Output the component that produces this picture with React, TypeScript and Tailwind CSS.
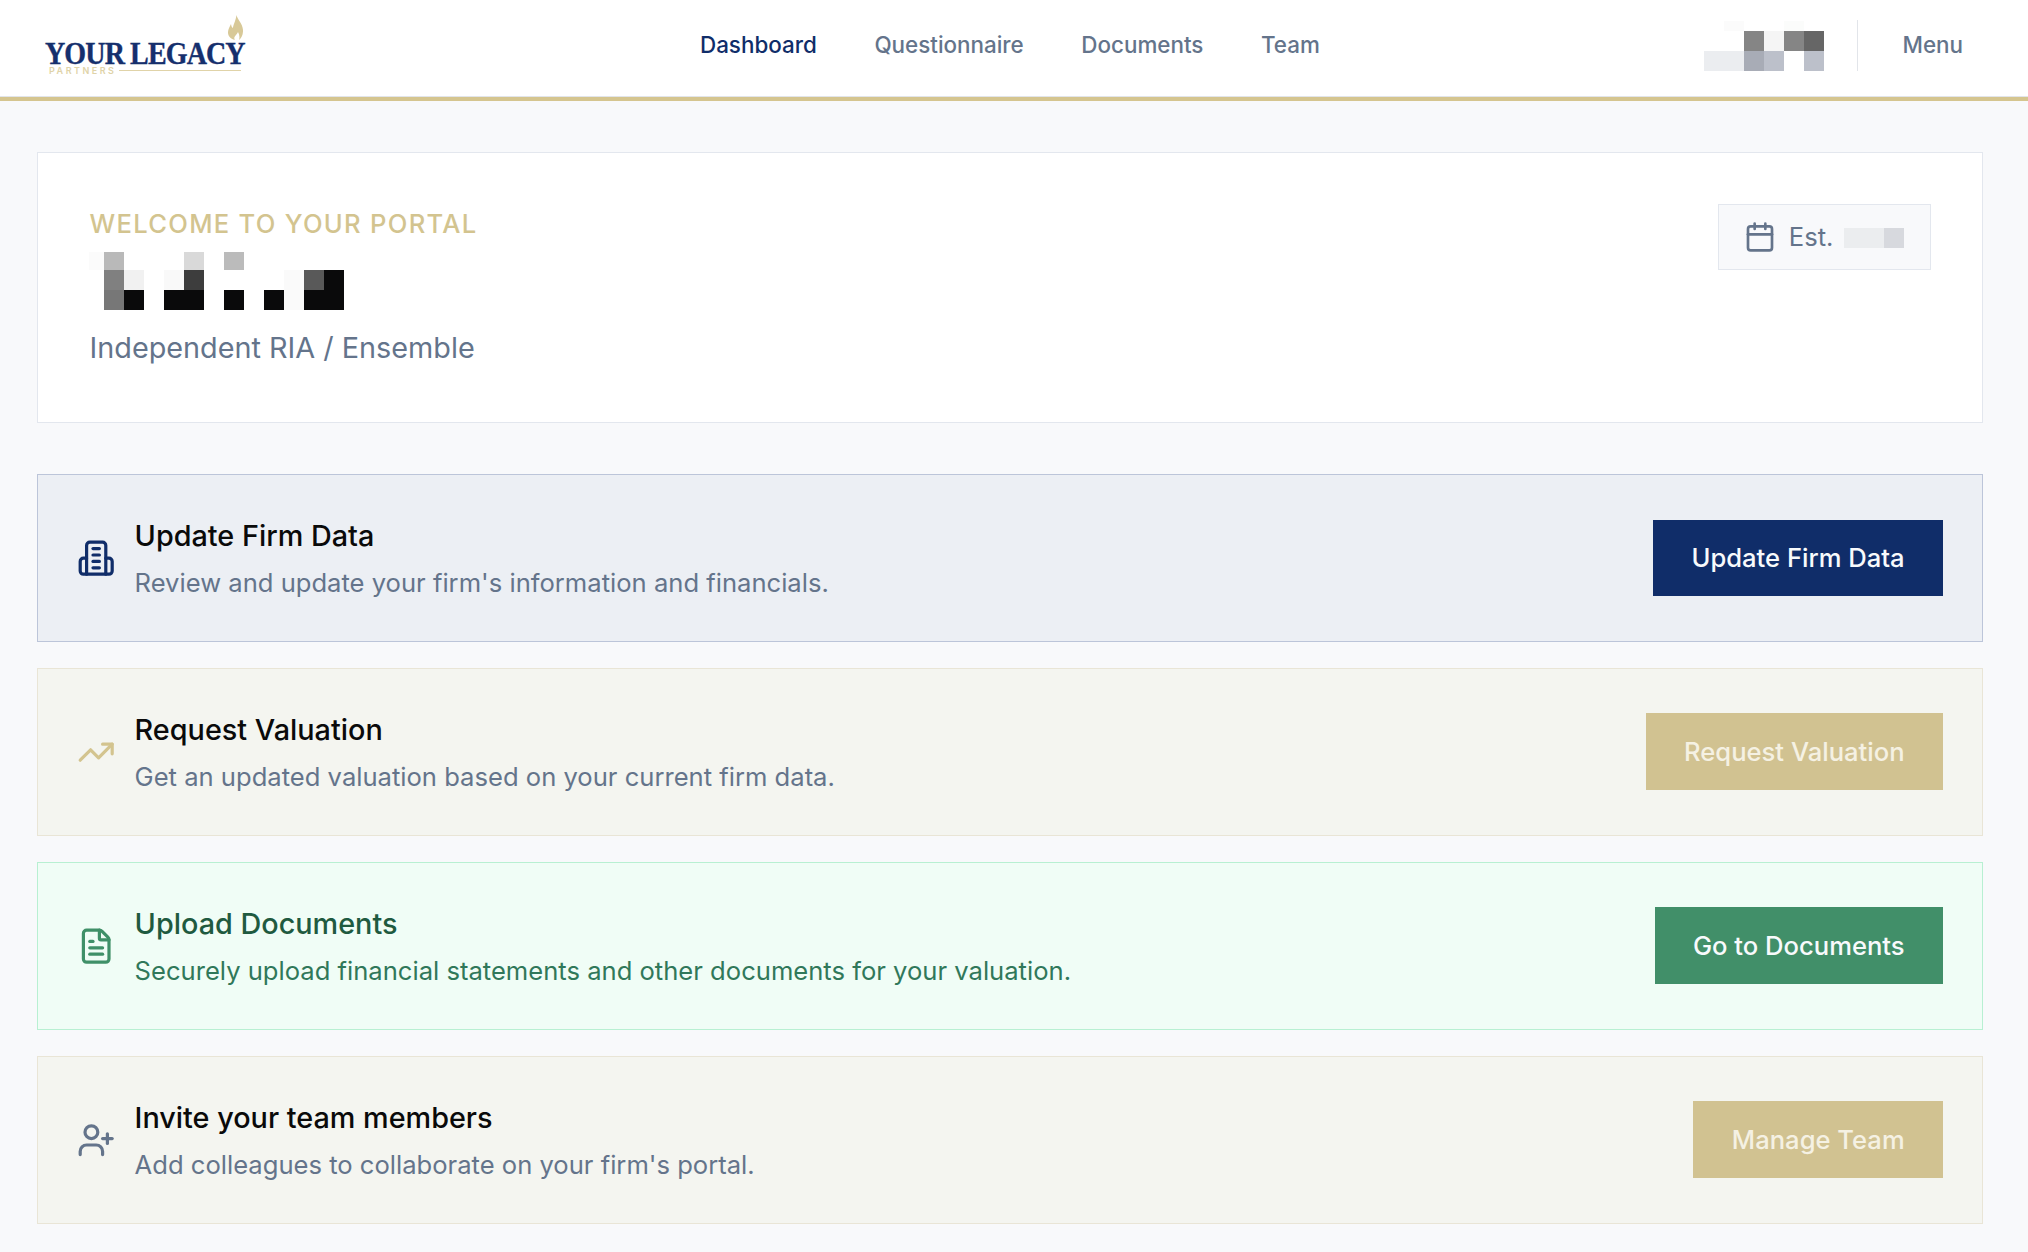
import { Calendar, FileText, TrendingUp, UserPlus } from "lucide-react";
import type { ReactNode } from "react";

type Cell = [number, number, number, number, string];

// pixelated redaction blocks from the source shot
const headerBlocks: Cell[] = [
  [20, 0, 20, 10, "#fbfbfb"],
  [80, 0, 20, 10, "#fbfcfb"],
  [40, 10, 20, 20, "#858585"],
  [60, 10, 20, 20, "#f5f5f5"],
  [80, 10, 20, 20, "#858585"],
  [100, 10, 20, 20, "#666666"],
  [0, 30, 40, 20, "#ebedf0"],
  [40, 30, 20, 20, "#a8acb6"],
  [60, 30, 20, 20, "#bcc0ca"],
  [100, 30, 20, 20, "#bcc0ca"],
];

const nameBlocks: Cell[] = [
  [0, 0, 15, 18, "#fbfbfb"],
  [15, 0, 20, 18, "#b9b9b9"],
  [95, 0, 20, 18, "#d9d9d9"],
  [135, 0, 20, 18, "#bbbbbb"],
  [15, 18, 20, 20, "#808080"],
  [35, 18, 20, 20, "#f1f1f1"],
  [75, 18, 20, 20, "#f9f9f9"],
  [95, 18, 20, 20, "#3d3d3d"],
  [195, 18, 20, 20, "#fafafa"],
  [215, 18, 20, 20, "#595959"],
  [235, 18, 20, 20, "#0a0a0b"],
  [15, 38, 20, 20, "#777777"],
  [35, 38, 20, 20, "#0a0a0b"],
  [75, 38, 40, 20, "#0a0a0b"],
  [135, 38, 20, 20, "#0a0a0b"],
  [175, 38, 20, 20, "#0a0a0b"],
  [195, 38, 20, 20, "#fafafa"],
  [215, 38, 40, 20, "#0a0a0b"],
];

function Pixels({ cells, w, h, className }: { cells: Cell[]; w: number; h: number; className?: string }) {
  return (
    <svg width={w} height={h} viewBox={`0 0 ${w} ${h}`} className={className} aria-hidden="true">
      {cells.map(([x, y, cw, ch, fill]) => (
        <rect key={`${x}-${y}`} x={x} y={y} width={cw} height={ch} fill={fill} />
      ))}
    </svg>
  );
}

function FirmIcon() {
  return (
    <svg
      width="38.4"
      height="38.4"
      viewBox="0 0 24 24"
      fill="none"
      stroke="currentColor"
      strokeWidth="2"
      strokeLinecap="round"
      strokeLinejoin="round"
      className="shrink-0 text-[#102d69]"
    >
      <path d="M6 22V4a2 2 0 0 1 2-2h8a2 2 0 0 1 2 2v18Z" />
      <path d="M6 12H4a2 2 0 0 0-2 2v6a2 2 0 0 0 2 2h2" />
      <path d="M18 12h2a2 2 0 0 1 2 2v6a2 2 0 0 1-2 2h-2" />
      <path d="M10 6h4" />
      <path d="M10 10h4" />
      <path d="M10 14h4" />
      <path d="M10 18h4" />
    </svg>
  );
}

function Logo() {
  return (
    <div className="relative h-[60px] w-[204px] shrink-0">
      <svg width="15" height="25" viewBox="0 0 15 25" className="absolute left-[183px] top-[-0.5px]" aria-hidden="true">
        <path
          d="M8.500 0C9 4 14.500 8 15 15c.2 4.500-1.500 8-4 10 .8-3 .5-5.500-1-8-.6 2-2.500 3-3.500 5-.4 1-.2 2 .3 3C3 24 .3 21.500 0 18c-.2-3 1.500-6 3-9 .2 1.500.6 3 1.800 4C5.500 9 8 5 8.500 0Z"
          fill="#d8c998"
        />
      </svg>
      <span className="absolute left-0 top-[27px] origin-left scale-x-[0.89] whitespace-nowrap font-['Liberation_Serif',serif] text-[31.5px] font-bold leading-[22px] tracking-[-1px] text-[#152f6d] [-webkit-text-stroke:0.4px_#152f6d]">
        YOUR LEGACY
      </span>
      <div className="absolute left-[4px] top-[50px] flex w-[192px] items-center gap-[3px]">
        <span className="font-['Inter',sans-serif] text-[9px] font-semibold leading-[10px] tracking-[2.5px] text-[#e0d3a8]">PARTNERS</span>
        <span className="h-px flex-1 bg-[#e0d3a8]" />
      </div>
    </div>
  );
}

function NavLink({ children, active }: { children: ReactNode; active?: boolean }) {
  return (
    <a className={active ? "text-[#102d69]" : "text-[#64748b]"} href="#">
      {children}
    </a>
  );
}

function ActionCard({
  icon,
  title,
  body,
  action,
  cardClass,
  titleClass,
  bodyClass,
  buttonClass,
}: {
  icon: ReactNode;
  title: string;
  body: string;
  action: string;
  cardClass: string;
  titleClass: string;
  bodyClass: string;
  buttonClass: string;
}) {
  return (
    <div className={`flex h-[168px] items-center justify-between border-[1.3px] px-[39px] ${cardClass}`}>
      <div className="flex items-center gap-[19.2px]">
        {icon}
        <div className="pt-[1px]">
          <h3 className={`text-[28.8px] font-medium leading-[38px] ${titleClass}`}>{title}</h3>
          <p className={`mt-[10px] text-[25.6px] leading-[36px] ${bodyClass}`}>{body}</p>
        </div>
      </div>
      <button type="button" className={`shrink-0 px-[38.4px] text-[25.6px] font-medium ${buttonClass}`}>
        {action}
      </button>
    </div>
  );
}

export default function App() {
  return (
    <div className="min-h-[1252px] bg-[#f8f9fb] font-['Inter',sans-serif]">
      <header className="border-b-[4px] border-[#d5c58f] bg-white">
        <div className="flex h-[97px] items-center border-b border-[#e2e5ea] pb-[5px] pl-[45px] pr-[65px]">
          <Logo />
          <nav className="-mt-[1px] ml-[451px] flex gap-[57.6px] text-[22.4px] font-medium">
            <NavLink active>Dashboard</NavLink>
            <NavLink>Questionnaire</NavLink>
            <NavLink>Documents</NavLink>
            <NavLink>Team</NavLink>
          </nav>
          <div className="ml-auto flex items-center">
            <Pixels cells={headerBlocks} w={120} h={50} className="mr-[33px]" />
            <div className="h-[51px] w-[1.3px] bg-[#e2e5ea]" />
            <a href="#" className="-mt-[1px] ml-[44px] text-[22.4px] font-medium text-[#64748b]">
              Menu
            </a>
          </div>
        </div>
      </header>

      <main className="flex flex-col gap-[26px] pl-[37px] pr-[45px] pt-[51px]">
        <section className="mb-[25px] flex h-[271px] items-start justify-between border-[1.3px] border-[#e3e7ee] bg-white py-[51px] pl-[51.5px] pr-[51px]">
          <div>
            <p className="mt-[2px] text-[25.6px] font-medium leading-[36px] tracking-[1.28px] text-[#d3c48f]">WELCOME TO YOUR PORTAL</p>
            <Pixels cells={nameBlocks} w={255} h={58} className="-ml-[0.5px] mt-[10px]" />
            <p className="mt-[18px] text-[28.8px] leading-[40px] text-[#64748b]">Independent RIA / Ensemble</p>
          </div>
          <div className="flex h-[66px] w-[213px] items-center gap-[12.8px] border-[1.3px] border-[#e3e7ee] bg-[#f8f9fb] pl-[25px]">
            <Calendar size={32} strokeWidth={2} className="shrink-0 text-[#64748b]" />
            <span className="text-[25.6px] text-[#64748b]">Est.</span>
            <Pixels
              cells={[
                [0, 0, 40, 20, "#ebedef"],
                [40, 0, 20, 20, "#d7d9de"],
              ]}
              w={60}
              h={20}
              className="-ml-[2px] mt-[2px]"
            />
          </div>
        </section>

        <ActionCard
          icon={<FirmIcon />}
          title="Update Firm Data"
          body="Review and update your firm's information and financials."
          action="Update Firm Data"
          cardClass="border-[#bcc5d9] bg-[#eceff4]"
          titleClass="text-[#0a0a0a]"
          bodyClass="text-[#64748b]"
          buttonClass="h-[76px] bg-[#102d69] text-[#f8fafc]"
        />
        <ActionCard
          icon={<TrendingUp size={38.4} strokeWidth={2} className="shrink-0 text-[#d3c48f]" />}
          title="Request Valuation"
          body="Get an updated valuation based on your current firm data."
          action="Request Valuation"
          cardClass="border-[#e9e5d6] bg-[#f4f5f0]"
          titleClass="text-[#0a0a0a]"
          bodyClass="text-[#64748b]"
          buttonClass="-mt-[1px] h-[77px] bg-[#d1c291] pt-[1px] text-[#f5f1e3]"
        />
        <ActionCard
          icon={<FileText size={38.4} strokeWidth={2} className="shrink-0 text-[#3f9068]" />}
          title="Upload Documents"
          body="Securely upload financial statements and other documents for your valuation."
          action="Go to Documents"
          cardClass="border-[#b8f0d2] bg-[#f0fdf6]"
          titleClass="text-[#1f5a40]"
          bodyClass="text-[#30785a]"
          buttonClass="-mt-[1px] h-[77px] bg-[#418f69] pt-[1px] text-[#f8fafc]"
        />
        <ActionCard
          icon={<UserPlus size={38.4} strokeWidth={2} className="shrink-0 text-[#64748b]" />}
          title="Invite your team members"
          body="Add colleagues to collaborate on your firm's portal."
          action="Manage Team"
          cardClass="border-[#e9e5d6] bg-[#f4f5f0]"
          titleClass="text-[#0a0a0a]"
          bodyClass="text-[#64748b]"
          buttonClass="-mt-[1px] h-[77px] bg-[#d1c291] pt-[1px] text-[#f5f1e3]"
        />
      </main>
    </div>
  );
}
